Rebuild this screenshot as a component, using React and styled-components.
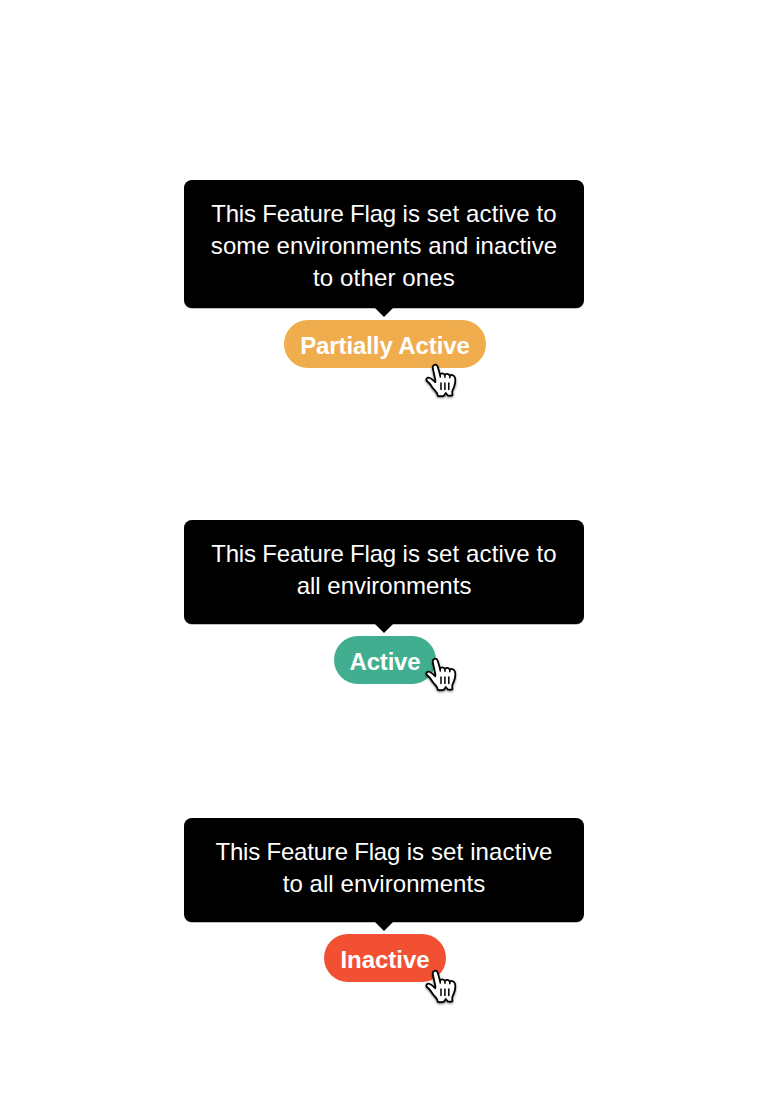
import React from "react";
import styled, { createGlobalStyle } from "styled-components";

const GlobalStyle = createGlobalStyle`
  body {
    margin: 0;
    background: #fff;
    font-family: "Liberation Sans", Arial, sans-serif;
  }
`;

const Page = styled.main`
  box-sizing: border-box;
  width: 768px;
  min-height: 1100px;
  padding-top: 180px;
  display: flex;
  flex-direction: column;
  align-items: center;
`;

const Example = styled.section`
  display: flex;
  flex-direction: column;
  align-items: center;
  margin-bottom: ${(p) => p.$gap}px;
`;

const Tooltip = styled.div`
  position: relative;
  box-sizing: border-box;
  width: 400px;
  height: ${(p) => p.$height}px;
  padding-top: 18px;
  border-radius: 8px;
  background: #000;
  box-shadow: 0 0.5px 0 rgba(0, 0, 0, 0.5);
  color: #fff;
  font-size: 24px;
  line-height: 32px;
  text-align: center;

  &::after {
    content: "";
    position: absolute;
    top: 100%;
    left: 50%;
    margin-left: -9px;
    border: 9px solid transparent;
    border-top-color: #000;
    border-bottom: 0;
  }
`;

const Line = styled.span`
  display: block;
  white-space: nowrap;
`;

const Phrase = styled.span`
  letter-spacing: ${(p) => p.$spacing}px;
`;

const Badge = styled.div`
  position: relative;
  box-sizing: border-box;
  width: ${(p) => p.$width}px;
  height: 48px;
  margin: 12px 0 0 2px;
  padding-top: 2px;
  border-radius: 24px;
  background: ${(p) => p.$color};
  color: #fff;
  font-size: 24px;
  font-weight: 700;
  line-height: 48px;
  letter-spacing: ${(p) => p.$spacing}px;
  text-align: center;
  white-space: nowrap;
`;

const Pointer = styled.svg`
  position: absolute;
  top: ${(p) => p.$top}px;
  left: calc(50% + 35px);
  width: 42px;
  height: 42px;
  overflow: visible;
  filter: drop-shadow(0 1.5px 1px rgba(0, 0, 0, 0.55));
`;

function HandPointer({ top }) {
  return (
    <Pointer $top={top} viewBox="0 0 42 42" aria-hidden="true">
      <path
        d="M15.4 20.2 L12.9 8.8 C12 4.2 16.6 3.3 17.9 7.2 L20 14.8 C20.8 12.9 24 12.8 24.8 15.2 C25.8 13.3 28.9 13.5 29.8 16 C30.9 14.4 33.8 14.6 34.8 17.3 C35.7 19.8 35.1 23.8 34.1 26.8 C33.3 29.3 32.4 29.9 32.2 31.9 L32.4 35.2 C30.9 35.9 29.3 35.8 27.9 35.5 L25.8 33 L23.8 35.8 C21.8 36.3 19.6 36.2 17.7 35.8 C17.7 33 15.5 31.2 13.6 29 C11.3 26.5 11 24.1 7.2 21.3 C5.3 19.4 7.1 16.8 9.9 18 C12 18.7 13.4 20.9 15.3 22.2 Z"
        fill="#fff"
        stroke="#000"
        strokeWidth="1.75"
        strokeLinejoin="round"
      />
      <path
        d="M20 14.8 L20.3 17.1 M24.8 15.2 L25 17.2 M29.8 16 L29.8 17.8 M21 23 V29.6 M24.9 23 V29.6 M28.8 23 V29.6"
        fill="none"
        stroke="#000"
        strokeWidth="1.5"
        strokeLinecap="round"
      />
    </Pointer>
  );
}

const flags = [
  {
    label: "Partially Active",
    color: "#f0ad4e",
    width: 202,
    spacing: -0.1,
    height: 128,
    gap: 152,
    pointerTop: 40,
    lines: [
      [["This Feature Flag ", -0.2], ["is set active to", 0.14]],
      [["some environments and inactive", 0.07]],
      [["to other ones", 0.15]],
    ],
  },
  {
    label: "Active",
    color: "#41af8f",
    width: 102,
    spacing: -0.2,
    height: 104,
    gap: 134,
    pointerTop: 18,
    lines: [
      [["This Feature Flag ", -0.2], ["is set active to", 0.14]],
      [["all environments", 0]],
    ],
  },
  {
    label: "Inactive",
    color: "#f25033",
    width: 122,
    spacing: -0.05,
    height: 104,
    gap: 0,
    pointerTop: 32,
    lines: [
      [["This Feature Flag ", -0.2], ["is set inactive", 0.12]],
      [["to all environments", 0.06]],
    ],
  },
];

export default function App() {
  return (
    <>
      <GlobalStyle />
      <Page>
        {flags.map((flag) => (
          <Example key={flag.label} $gap={flag.gap}>
            <Tooltip role="tooltip" $height={flag.height}>
              {flag.lines.map((phrases) => (
                <Line key={phrases[0][0]}>
                  {phrases.map(([text, spacing]) => (
                    <Phrase key={text} $spacing={spacing}>
                      {text}
                    </Phrase>
                  ))}
                </Line>
              ))}
            </Tooltip>
            <Badge $color={flag.color} $width={flag.width} $spacing={flag.spacing}>
              {flag.label}
              <HandPointer top={flag.pointerTop} />
            </Badge>
          </Example>
        ))}
      </Page>
    </>
  );
}
